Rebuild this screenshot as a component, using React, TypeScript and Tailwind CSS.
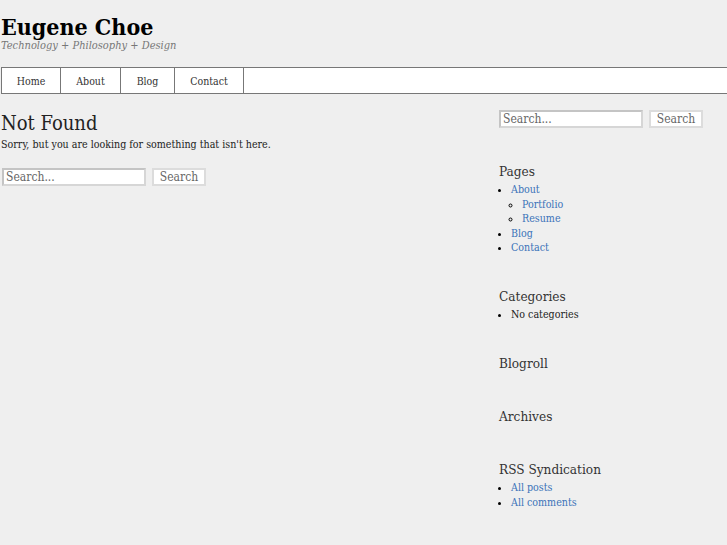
const serif = { fontFamily: '"DejaVu Serif Condensed", "DejaVu Serif", serif', fontStretch: 'condensed' };

function SearchForm() {
  return (
    <form className="flex items-center gap-[6px]" onSubmit={(e) => e.preventDefault()}>
      <input
        type="text"
        defaultValue="Search..."
        style={serif}
        className="w-[144px] h-[18px] border-2 border-[#d6d6d6] border-t-[#c4c4c4] border-l-[#c4c4c4] bg-white pl-[2px] text-[12px] leading-none text-[#666] outline-none"
      />
      <button
        type="button"
        style={serif}
        className="w-[54px] h-[18px] border-2 border-[#dcdcdc] bg-white text-[12px] leading-none text-[#666]"
      >
        Search
      </button>
    </form>
  );
}

const navItems = ['Home', 'About', 'Blog', 'Contact'];
const navWidths = ['w-[59px]', 'w-[60px]', 'w-[54px]', 'w-[69px]'];

export default function App() {
  return (
    <div className="min-h-[545px] bg-[#efefef] text-[#222] text-[10.6px]" style={serif}>
      <header className="pt-[14px] pl-[1px]">
        <h1 className="text-[23px] font-bold leading-[26px] text-black">Eugene Choe</h1>
        <p className="text-[11px] italic leading-[12px] text-[#777]">Technology + Philosophy + Design</p>
      </header>

      <nav className="mt-[15px] ml-[1px] flex h-[27px] border border-r-0 border-[#777] bg-white">
        {navItems.map((item, i) => (
          <a
            key={item}
            href="#"
            className={`flex items-center justify-center border-r border-[#777] pt-[2px] text-[10.5px] text-[#333] ${navWidths[i]}`}
          >
            {item}
          </a>
        ))}
      </nav>

      <div className="flex">
        <main className="w-[499px] pl-[1px]">
          <h2 className="mt-[17px] text-[20px] leading-[24px] text-[#222]">Not Found</h2>
          <p className="mt-[2px] leading-[14px]">Sorry, but you are looking for something that isn't here.</p>
          <div className="mt-[17px] pl-[1px]">
            <SearchForm />
          </div>
        </main>

        <aside className="w-[228px] pt-[16px]">
          <SearchForm />

          <h3 className="mt-[34px] text-[13.5px] leading-[18px] text-[#333]">Pages</h3>
          <ul className="mt-[2px] list-disc pl-[12px] leading-[14.5px] text-[#3b73b9] marker:text-black">
            <li><a href="#">About</a>
              <ul className="list-[circle] pl-[11px] marker:text-[#555]">
                <li><a href="#">Portfolio</a></li>
                <li><a href="#">Resume</a></li>
              </ul>
            </li>
            <li><a href="#">Blog</a></li>
            <li><a href="#">Contact</a></li>
          </ul>

          <h3 className="mt-[32px] text-[13.5px] leading-[18px] text-[#333]">Categories</h3>
          <ul className="mt-[2px] list-disc pl-[12px] leading-[14.5px] text-[#222] marker:text-black">
            <li>No categories</li>
          </ul>

          <h3 className="mt-[33px] text-[13.5px] leading-[18px] text-[#333]">Blogroll</h3>

          <h3 className="mt-[35px] text-[13.5px] leading-[18px] text-[#333]">Archives</h3>

          <h3 className="mt-[35px] text-[13.5px] leading-[18px] text-[#333]">RSS Syndication</h3>
          <ul className="mt-[2px] list-disc pl-[12px] leading-[14.5px] text-[#3b73b9] marker:text-black">
            <li><a href="#">All posts</a></li>
            <li><a href="#">All comments</a></li>
          </ul>
        </aside>
      </div>
    </div>
  );
}
